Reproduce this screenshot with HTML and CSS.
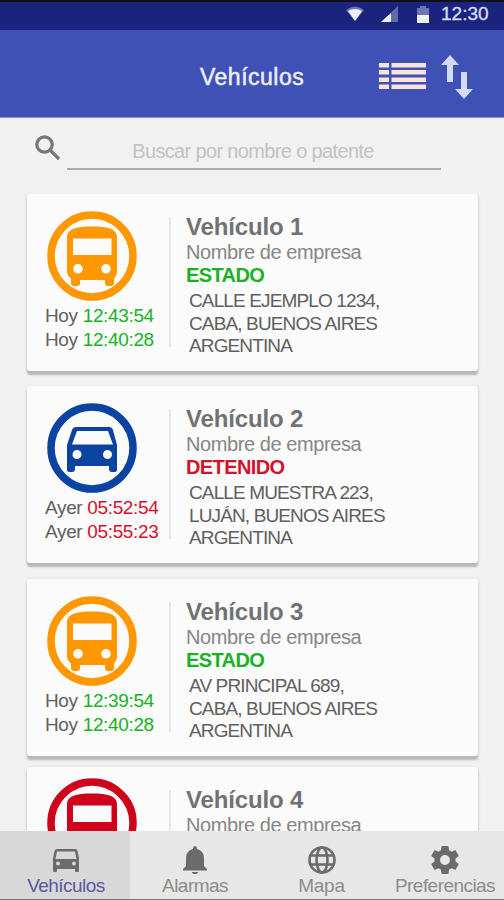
FILE: index.html
```html
<!DOCTYPE html>
<html lang="es">
<head>
  <meta charset="UTF-8" />
  <meta name="viewport" content="width=device-width, initial-scale=1.0"/>
  <title>Vehículos</title>
  <link rel="stylesheet" href="styles.css">
</head>
<body>
  <svg class="sprite">
    <symbol id="bus" viewBox="0 0 90 90">
      <circle cx="45" cy="45" r="41" fill="none" stroke="currentColor" stroke-width="7.5"/>
      <path fill="currentColor" fill-rule="evenodd" d="M20 26C20 18 29 15.500 45 15.500S70 18 70 26V60Q70 65 67 67.500V72Q67 75 64 75H61Q58 75 58 72V69H33V72Q33 75 30 75H27Q24 75 24 72V67.500Q20 65 20 60ZM26 27.500V44H64.500V27.500ZM31 53A4.800 4.800 0 1 0 31 62.600A4.800 4.800 0 1 0 31 53ZM59 53A4.800 4.800 0 1 0 59 62.600A4.800 4.800 0 1 0 59 53Z"/>
    </symbol>
    <symbol id="car" viewBox="0 0 90 90">
      <circle cx="45" cy="45" r="41" fill="none" stroke="currentColor" stroke-width="7.5"/>
      <path fill="currentColor" fill-rule="evenodd" d="M29 24H62Q65 24 66 27L70 42V67Q70 69 68 69H65Q62 69 62 66V63H28V66Q28 69 25 69H22Q20 69 20 67V42L25 27Q26 24 29 24ZM30 28L25 41.500H66L61 28ZM30 47A4.500 4.500 0 1 0 30 56A4.500 4.500 0 1 0 30 47ZM60.500 47A4.500 4.500 0 1 0 60.500 56A4.500 4.500 0 1 0 60.500 47Z"/>
    </symbol>
  </svg>

  <div class="app">
    <div class="status-bar">
      <svg class="wifi" viewBox="0 0 18 16"><path d="M0 4Q9-3 18 4L9 15Z" opacity=".4"/><path d="M2 5Q9 1 16 5L9 15Z"/></svg>
      <svg class="signal" viewBox="0 0 17 16"><path d="M17 0V16H0Z" opacity=".35"/><path d="M10 7V16H0Z"/></svg>
      <svg class="battery" viewBox="0 0 12 17"><path d="M3 0H9V2H12V17H0V2H3Z" opacity=".4"/><path d="M0 9H12V17H0Z"/></svg>
      <span class="clock">12:30</span>
    </div>

    <header class="toolbar">
      <h1>Vehículos</h1>
      <svg class="list-icon" viewBox="0 0 47 27"><path d="M0 0H10V4.500H0ZM12.500 0H47V4.500H12.500ZM0 7H10V11.500H0ZM12.500 7H47V11.500H12.500ZM0 14.500H10V19H0ZM12.500 14.500H47V19H12.500ZM0 21.500H10V26H0ZM12.500 21.500H47V26H12.500Z"/></svg>
      <svg class="sort-icon" viewBox="0 0 32 44"><path d="M9 0L18 10H12V27H6V10H0ZM20 17H26V34H32L23 44L14 34H20Z"/></svg>
    </header>

    <div class="search">
      <svg class="search-icon" viewBox="0 0 26 26"><circle cx="9.500" cy="9.500" r="7.700"/><path d="M15 15L24 24"/></svg>
      <input type="text" placeholder="Buscar por nombre o patente">
    </div>

    <main class="list">
      <div class="card">
        <div class="side">
          <svg class="badge orange"><use href="#bus"/></svg>
          <p>Hoy <span class="on">12:43:54</span></p>
          <p>Hoy <span class="on">12:40:28</span></p>
        </div>
        <div class="info">
          <h2>Vehículo 1</h2>
          <p class="company">Nombre de empresa</p>
          <p class="state on">ESTADO</p>
          <p class="address">CALLE EJEMPLO 1234,<br>CABA, BUENOS AIRES<br>ARGENTINA</p>
        </div>
      </div>

      <div class="card">
        <div class="side">
          <svg class="badge blue"><use href="#car"/></svg>
          <p>Ayer <span class="off">05:52:54</span></p>
          <p>Ayer <span class="off">05:55:23</span></p>
        </div>
        <div class="info">
          <h2>Vehículo 2</h2>
          <p class="company">Nombre de empresa</p>
          <p class="state off">DETENIDO</p>
          <p class="address">CALLE MUESTRA 223,<br>LUJÁN, BUENOS AIRES<br>ARGENTINA</p>
        </div>
      </div>

      <div class="card third">
        <div class="side">
          <svg class="badge orange"><use href="#bus"/></svg>
          <p>Hoy <span class="on">12:39:54</span></p>
          <p>Hoy <span class="on">12:40:28</span></p>
        </div>
        <div class="info">
          <h2>Vehículo 3</h2>
          <p class="company">Nombre de empresa</p>
          <p class="state on">ESTADO</p>
          <p class="address">AV PRINCIPAL 689,<br>CABA, BUENOS AIRES<br>ARGENTINA</p>
        </div>
      </div>

      <div class="card last">
        <div class="side">
          <svg class="badge red"><use href="#bus"/></svg>
        </div>
        <div class="info">
          <h2>Vehículo 4</h2>
          <p class="company">Nombre de empresa</p>
        </div>
      </div>
    </main>

    <nav class="tabs">
      <a class="tab active">
        <svg viewBox="0 0 28 28"><path fill-rule="evenodd" d="M5 3H23Q25 3 25.500 5L27 12V25Q27 26 26 26H24Q23 26 23 25V23H5V25Q5 26 4 26H2Q1 26 1 25V12L2.500 5Q3 3 5 3ZM5 5.500L3.500 13H24.500L23 5.500ZM6 15.500A2 2 0 1 0 6 19.500A2 2 0 1 0 6 15.500ZM22 15.500A2 2 0 1 0 22 19.500A2 2 0 1 0 22 15.500Z"/></svg>
        <span>Vehículos</span>
      </a>
      <a class="tab">
        <svg viewBox="0 0 28 28"><path d="M14 0Q16 0 16 3Q23 5 23 12V20L26 23V24.500H2V23L5 20V12Q5 5 12 3Q12 0 14 0ZM11 26H17Q17 28 14 28T11 26Z"/></svg>
        <span>Alarmas</span>
      </a>
      <a class="tab map">
        <svg viewBox="0 0 28 28"><g fill="none" stroke="currentColor" stroke-width="2.600"><circle cx="14" cy="14" r="12.500"/><ellipse cx="14" cy="14" rx="5.500" ry="12.500"/><path d="M3 9.500H25M3 18.500H25"/></g></svg>
        <span>Mapa</span>
      </a>
      <a class="tab prefs">
        <svg viewBox="2 2 20 20"><path d="M19.430 12.980c.04-.32.07-.64.07-.98s-.03-.66-.07-.98l2.110-1.650c.19-.15.24-.42.12-.64l-2-3.460c-.12-.22-.39-.3-.61-.22l-2.490 1c-.52-.4-1.080-.73-1.690-.98l-.38-2.650C14.460 2.180 14.250 2 14 2h-4c-.25 0-.46.18-.49.42l-.38 2.650c-.61.25-1.170.59-1.690.98l-2.490-1c-.23-.09-.49 0-.61.22l-2 3.460c-.13.22-.07.49.12.64l2.110 1.650c-.04.32-.07.65-.07.98s.03.66.07.98l-2.110 1.650c-.19.15-.24.42-.12.64l2 3.460c.12.22.39.3.61.22l2.490-1c.52.4 1.080.73 1.690.98l.38 2.650c.03.24.24.42.49.42h4c.25 0 .46-.18.49-.42l.38-2.650c.61-.25 1.170-.59 1.690-.98l2.490 1c.23.09.49 0 .61-.22l2-3.460c.12-.22.07-.49-.12-.64l-2.110-1.650zM12 15.500c-1.930 0-3.500-1.570-3.500-3.500s1.570-3.500 3.500-3.500 3.500 1.570 3.500 3.500-1.570 3.500-3.500 3.500z"/></svg>
        <span>Preferencias</span>
      </a>
    </nav>
  </div>
</body>
</html>
```
FILE: styles.css
```css
* {
  box-sizing: border-box;
}
body {
  margin: 0;
  font-family: 'Liberation Sans', Arial, sans-serif;
  background-color: #f1f1f1;
  color: #606060;
}
h1, h2, p {
  margin: 0;
}
.sprite {
  display: none;
}
.app {
  height: 900px;
  display: flex;
  flex-direction: column;
  overflow: hidden;
}
.status-bar {
  height: 30px;
  flex: none;
  display: flex;
  align-items: center;
  justify-content: flex-end;
  padding: 0 15px 4px 0;
  background: #1a237e;
  border-top: 2px solid #101018;
  fill: #eef0fb;
  color: #d5d9f0;
}
.wifi {
  width: 18px;
  height: 16px;
  margin-right: 17px;
}
.signal {
  width: 17px;
  height: 16px;
  margin-right: 19px;
}
.battery {
  width: 12px;
  height: 17px;
  margin-right: 12px;
}
.clock {
  font-size: 19px;
  width: 48px;
  -webkit-text-stroke: 0.4px;
}
.toolbar {
  height: 88px;
  flex: none;
  display: flex;
  align-items: center;
  padding: 6px 31px 0 200px;
  background: #3f51b5;
  border-bottom: 1px solid #8791cf;
}
.toolbar h1 {
  width: 179px;
  padding-top: 2px;
  font-size: 23px;
  font-weight: normal;
  letter-spacing: 0.5px;
  color: #eceefa;
  -webkit-text-stroke: 0.5px;
}
.list-icon {
  width: 47px;
  height: 27px;
  fill: #f8e5d8;
}
.sort-icon {
  width: 32px;
  height: 44px;
  margin-left: 15px;
  fill: #d3daf5;
}
.search {
  height: 76px;
  flex: none;
  display: flex;
  padding: 17px 0 0 35px;
}
.search-icon {
  width: 26px;
  height: 26px;
  fill: none;
  stroke: #777;
  stroke-width: 3.2;
}
.search input {
  width: 374px;
  height: 35px;
  margin-left: 6px;
  padding: 0 2px 0 0;
  border: none;
  border-bottom: 2px solid #aaa;
  background: none;
  font-family: inherit;
  font-size: 20px;
  letter-spacing: -0.65px;
  text-align: center;
}
.search input::placeholder {
  color: #c2c2c2;
}
.list {
  flex: 1;
  min-height: 0;
  overflow: hidden;
  padding: 0 26px 0 27px;
}
.card {
  height: 177px;
  margin-bottom: 15px;
  display: flex;
  background: #fbfbfb;
  border-radius: 3px;
  box-shadow: 0 4px 2px #b9b9b9, 0 1px 3px #ccc;
}
.third {
  margin-top: 16px;
  margin-bottom: 11px;
}
.side {
  width: 142px;
  padding: 17px 0 0 18px;
  font-size: 19px;
  letter-spacing: -0.35px;
  white-space: nowrap;
}
.side p {
  line-height: 24px;
}
.badge {
  display: block;
  width: 90px;
  height: 90px;
  margin: 0 0 3px 2px;
}
.orange {
  color: #ff9800;
}
.blue {
  color: #0b44a0;
}
.red {
  color: #d0021b;
}
.on {
  color: #19b125;
}
.off {
  color: #d3122d;
}
.info {
  height: 130px;
  margin-top: 23px;
  padding-left: 15px;
  border-left: 2px solid #e6e6e6;
  white-space: nowrap;
}
.info h2 {
  margin-top: -4px;
  font-size: 24px;
  line-height: 28px;
  letter-spacing: -0.15px;
  color: #707274;
}
.company {
  font-size: 20px;
  line-height: 23px;
  letter-spacing: -0.42px;
  color: #868686;
}
.state {
  font-size: 20px;
  line-height: 23px;
  font-weight: bold;
  letter-spacing: -0.6px;
}
.address {
  padding: 3px 0 0 3px;
  font-size: 19px;
  line-height: 22.5px;
  letter-spacing: -0.87px;
  color: #606060;
}
.last .side {
  padding-top: 11px;
}
.tabs {
  height: 69px;
  flex: none;
  display: grid;
  grid-template-columns: 130px 130px 123px 121px;
  background: #e7e7e7;
  border-bottom: 1px solid #777;
}
.tab {
  display: flex;
  flex-direction: column;
  align-items: center;
  padding-top: 15px;
  font-size: 19px;
  line-height: 24px;
  letter-spacing: -0.55px;
  color: #8c8c8c;
}
.tab svg {
  width: 28px;
  height: 28px;
  fill: #6b6b6b;
  color: #6b6b6b;
}
.map {
  letter-spacing: -0.2px;
}
.prefs {
  padding-left: 3px;
}
.active {
  background: #d8d8d8;
  padding-left: 2px;
  color: #5a58a0;
}
```
